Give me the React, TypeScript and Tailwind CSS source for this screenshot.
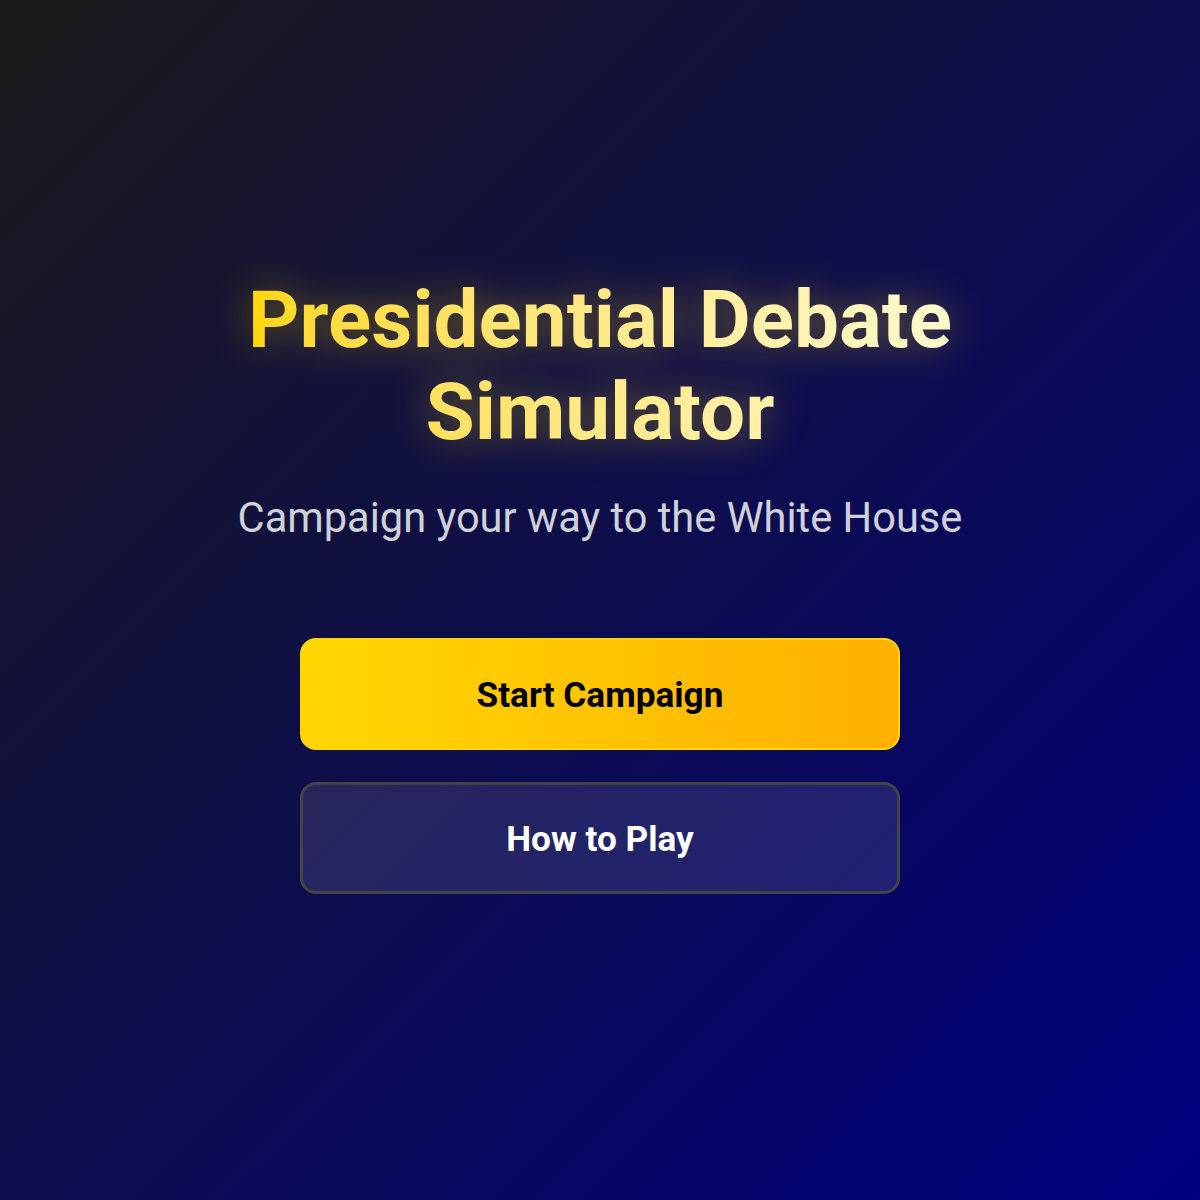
import React from "react";

const App: React.FC = () => {
  return (
    <div
      className="min-h-screen w-full flex flex-col items-center justify-center pb-8 bg-[linear-gradient(135deg,#1a1a1a_0%,#000080_100%)]"
      style={{ fontFamily: "Roboto, 'Liberation Sans', sans-serif" }}
    >
      <h1 className="text-center text-[80px] leading-[92px] font-bold bg-linear-to-r from-[#ffd700] to-[#fffacd] bg-clip-text text-transparent drop-shadow-[0_0_20px_rgba(255,215,0,0.4)]">
        Presidential Debate
        <br />
        Simulator
      </h1>
      <p className="mt-[29px] text-[41.6px] leading-[1.5] text-[#d0d0da]">
        Campaign your way to the White House
      </p>
      <div className="mt-[88px] flex flex-col gap-8 w-[600px]">
        <button className="w-full h-[112px] pt-1 rounded-2xl border-2 border-[#ffd700] bg-linear-to-r from-[#ffd700] to-[#ffb000] text-black text-[35.2px] font-bold">
          Start Campaign
        </button>
        <button className="w-full h-[112px] pt-1 rounded-2xl border-[3px] border-[#444444] bg-white/10 text-white text-[35.2px] font-bold">
          How to Play
        </button>
      </div>
    </div>
  );
};

export default App;
